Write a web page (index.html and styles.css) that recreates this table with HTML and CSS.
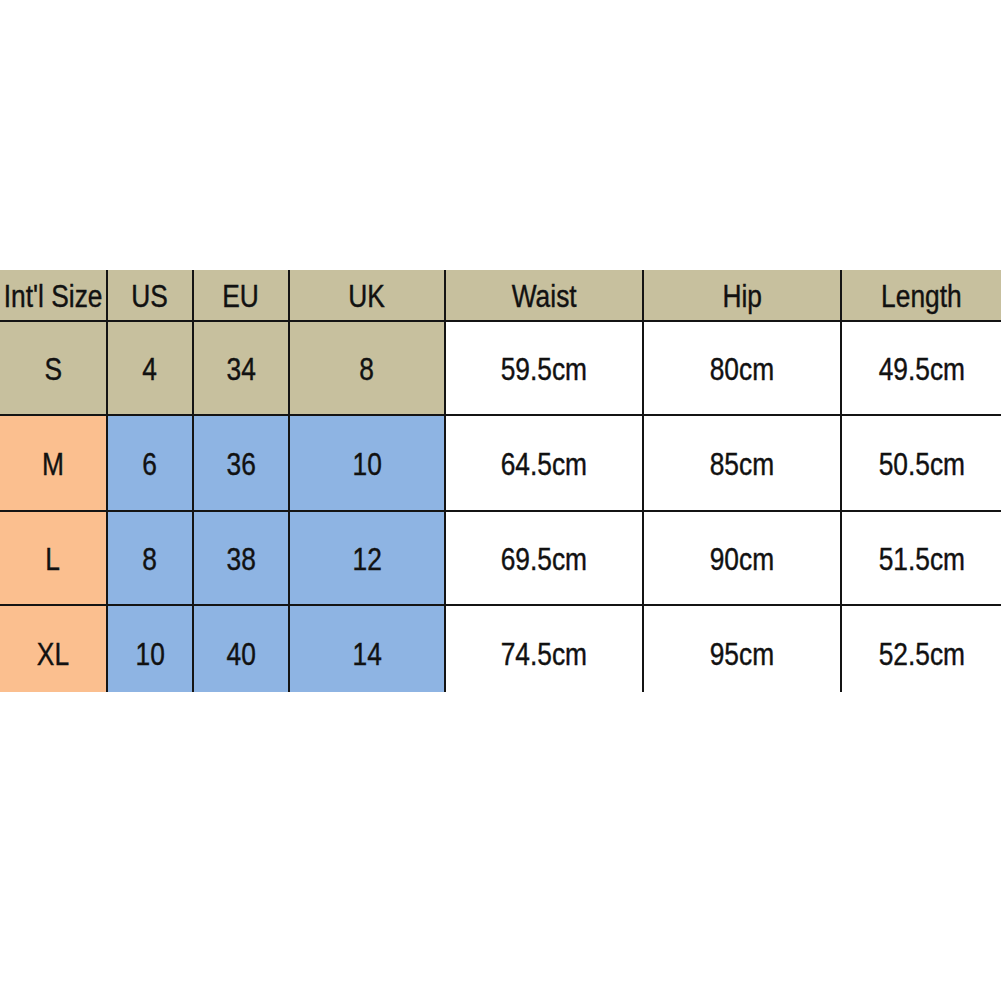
FILE: index.html
```html
<!DOCTYPE html>
<html>
<head>
<meta charset="utf-8">
<link rel="stylesheet" href="styles.css">
</head>
<body>
<div class="page">
  <div class="chart">
    <div class="cell tan"><span>Int'l Size</span></div>
    <div class="cell tan"><span>US</span></div>
    <div class="cell tan"><span>EU</span></div>
    <div class="cell tan"><span>UK</span></div>
    <div class="cell tan"><span>Waist</span></div>
    <div class="cell tan"><span>Hip</span></div>
    <div class="cell tan"><span>Length</span></div>

    <div class="cell tan"><span>S</span></div>
    <div class="cell tan"><span>4</span></div>
    <div class="cell tan"><span>34</span></div>
    <div class="cell tan"><span>8</span></div>
    <div class="cell white"><span>59.5cm</span></div>
    <div class="cell white"><span>80cm</span></div>
    <div class="cell white"><span>49.5cm</span></div>

    <div class="cell orange"><span>M</span></div>
    <div class="cell blue"><span>6</span></div>
    <div class="cell blue"><span>36</span></div>
    <div class="cell blue"><span>10</span></div>
    <div class="cell white"><span>64.5cm</span></div>
    <div class="cell white"><span>85cm</span></div>
    <div class="cell white"><span>50.5cm</span></div>

    <div class="cell orange"><span>L</span></div>
    <div class="cell blue"><span>8</span></div>
    <div class="cell blue"><span>38</span></div>
    <div class="cell blue"><span>12</span></div>
    <div class="cell white"><span>69.5cm</span></div>
    <div class="cell white"><span>90cm</span></div>
    <div class="cell white"><span>51.5cm</span></div>

    <div class="cell orange"><span>XL</span></div>
    <div class="cell blue"><span>10</span></div>
    <div class="cell blue"><span>40</span></div>
    <div class="cell blue"><span>14</span></div>
    <div class="cell white"><span>74.5cm</span></div>
    <div class="cell white"><span>95cm</span></div>
    <div class="cell white"><span>52.5cm</span></div>
  </div>
</div>
</body>
</html>
```

FILE: styles.css
```css
html, body {
  margin: 0;
  padding: 0;
  background: #ffffff;
}

.page {
  width: 1001px;
  height: 1001px;
  padding-top: 270px;
  box-sizing: border-box;
}

.chart {
  display: grid;
  grid-template-columns: 106px 84px 94px 154px 196px 196px 159px;
  grid-template-rows: 50px 92px 94px 92px 94px;
  gap: 2px;
  background: #141414;
  width: 1001px;
  height: 422px;
  overflow: hidden;
}

.cell {
  display: flex;
  align-items: center;
  justify-content: center;
  font-family: "Liberation Sans Narrow", "Liberation Sans", Arial, sans-serif;
  font-size: 31px;
  color: #111111;
  -webkit-text-stroke: 0.4px #111111;
  white-space: nowrap;
  overflow: hidden;
}

.cell span {
  display: inline-block;
  transform: scaleX(0.85);
  padding-top: 4px;
}

.tan { background: #c7c09e; }
.orange { background: #fbbf8f; }
.blue { background: #8eb4e3; }
.white { background: #ffffff; }
```
